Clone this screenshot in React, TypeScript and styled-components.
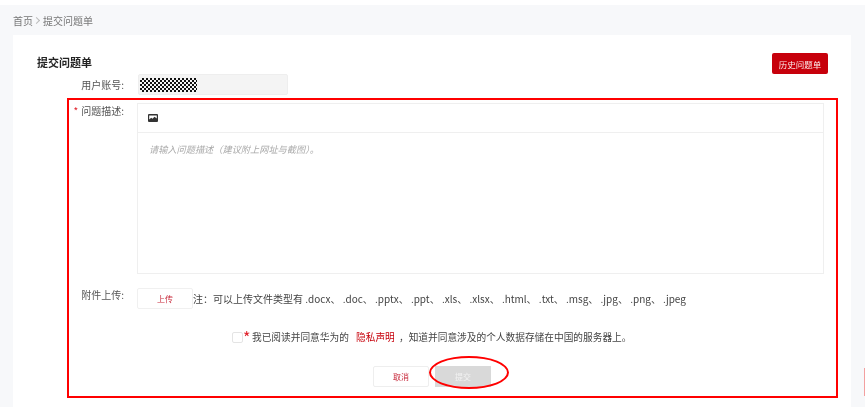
import styled, { createGlobalStyle } from 'styled-components';

const fileTypes = '.docx、 .doc、 .pptx、 .ppt、 .xls、 .xlsx、 .html、 .txt、 .msg、 .jpg、 .png、 .jpeg';

const GlobalStyle = createGlobalStyle`
  html, body {
    margin: 0;
    padding: 0;
    background: #fff;
  }
  * {
    box-sizing: border-box;
  }
`;

const App: React.FC = () => {
  return (
    <>
      <GlobalStyle />
      <Page>
        <Breadcrumb>
          <span>首页</span>
          <Crumbsep />
          <span>提交问题单</span>
        </Breadcrumb>
        <Card>
          <Header>
            <Title>提交问题单</Title>
            <HistoryButton>历史问题单</HistoryButton>
          </Header>
          <AccountRow>
            <Label>用户账号:</Label>
            <AccountInput>
              <Masked />
            </AccountInput>
          </AccountRow>
          <Highlight>
            <DescriptionRow>
              <Label>
                <Required>*</Required>问题描述:
              </Label>
              <Editor>
                <EditorToolbar>
                  <ImageIcon viewBox="0 0 10 8">
                    <path
                      fillRule="evenodd"
                      d="M1 0h8a1 1 0 0 1 1 1v6a1 1 0 0 1-1 1H1a1 1 0 0 1-1-1V1a1 1 0 0 1 1-1zm.2 1.4v4l2-1.7 1.3 1 2-1.9 2.3 1.7V1.4z"
                    />
                  </ImageIcon>
                </EditorToolbar>
                <Placeholder>请输入问题描述（建议附上网址与截图）。</Placeholder>
              </Editor>
            </DescriptionRow>
            <UploadRow>
              <Label>附件上传:</Label>
              <UploadButton>上传</UploadButton>
              <UploadNote>注：可以上传文件类型有 {fileTypes}</UploadNote>
            </UploadRow>
            <AgreementRow>
              <Checkbox />
              <BigStar>*</BigStar>
              <AgreementText>
                我已阅读并同意华为的 <PrivacyLink>隐私声明</PrivacyLink> ，知道并同意涉及的个人数据存储在中国的服务器上。
              </AgreementText>
            </AgreementRow>
            <Actions>
              <CancelButton>取消</CancelButton>
              <SubmitButton>
                提交
                <Ellipse />
              </SubmitButton>
            </Actions>
          </Highlight>
        </Card>
        <EdgeMark />
      </Page>
    </>
  );
};

const Page = styled.div`
  position: relative;
  height: 402px;
  margin-top: 5px;
  padding: 0 14px 0 13px;
  overflow: hidden;
  background: #f7f8fa;
  font-family: "Noto Sans CJK SC", "Open Sans", sans-serif;
  filter: blur(0.35px);
`;

const Breadcrumb = styled.div`
  display: flex;
  align-items: center;
  height: 30px;
  font-size: 10px;
  color: #777;
`;

const Crumbsep = styled.i`
  width: 5px;
  height: 5px;
  margin: 0 4px 0 1px;
  border-top: 1px solid #bbb;
  border-right: 1px solid #bbb;
  transform: rotate(45deg);
`;

const Card = styled.div`
  height: 372px;
  padding: 18px 23px 0 24px;
  background: #fff;
`;

const Header = styled.div`
  display: flex;
  justify-content: space-between;
  align-items: flex-start;
  height: 21px;
`;

const Title = styled.h2`
  margin: 0;
  font-size: 11px;
  font-weight: 700;
  line-height: 18px;
  color: #222;
`;

const HistoryButton = styled.button`
  width: 56px;
  height: 21px;
  padding: 0;
  border: 0;
  border-radius: 2px;
  background: #c7000b;
  color: #fbe8e8;
  font-family: inherit;
  font-size: 8.5px;
`;

const AccountRow = styled.div`
  display: flex;
  align-items: center;
  height: 21px;
  margin-bottom: 3px;
  gap: 14px;
`;

const Label = styled.label`
  flex: none;
  width: 87px;
  font-size: 10px;
  line-height: 20px;
  color: #555;
  text-align: right;
  white-space: nowrap;
`;

const AccountInput = styled.div`
  display: flex;
  align-items: center;
  width: 150px;
  height: 21px;
  padding-left: 1px;
  border: 1px solid #eee;
  border-radius: 2px;
  background: #f4f4f4;
`;

const Masked = styled.div`
  width: 57px;
  height: 14px;
  background: repeating-conic-gradient(#111 0 25%, #f4f4f4 0 50%) 0 0 / 4px 4px;
`;

const Highlight = styled.section`
  width: 771px;
  height: 300px;
  margin-left: 30px;
  padding-top: 3px;
  border: 2px solid #f00;
`;

const DescriptionRow = styled.div`
  display: flex;
  gap: 13px;

  ${Label} {
    width: 55px;
    margin-top: -2px;
  }
`;

const Required = styled.span`
  margin-right: 3px;
  color: #e0212b;
`;

const Editor = styled.div`
  width: 687px;
  height: 171px;
  border: 1px solid #efefef;
`;

const EditorToolbar = styled.div`
  display: flex;
  align-items: center;
  height: 29px;
  padding-left: 10px;
  border-bottom: 1px solid #efefef;
`;

const ImageIcon = styled.svg`
  width: 10px;
  height: 8px;
  fill: #333;
`;

const Placeholder = styled.div`
  padding: 9px 0 0 11px;
  font-size: 9.2px;
  font-style: italic;
  line-height: 14px;
  color: #aaa;
`;

const UploadRow = styled.div`
  display: flex;
  align-items: flex-start;
  height: 21px;
  margin-top: 14px;

  ${Label} {
    width: 55px;
    margin: -3px 13px 0 0;
  }
`;

const UploadButton = styled.button`
  flex: none;
  width: 56px;
  height: 21px;
  padding: 0;
  border: 1px solid #f0f0f0;
  border-radius: 2px;
  background: #fff;
  color: #c7283a;
  font-family: inherit;
  font-size: 8px;
`;

const UploadNote = styled.span`
  font-size: 10px;
  line-height: 21px;
  color: #444;
  white-space: pre;
`;

const AgreementRow = styled.div`
  display: flex;
  align-items: center;
  height: 16px;
  margin-top: 20px;
  padding-left: 163px;
`;

const Checkbox = styled.span`
  width: 11px;
  height: 11px;
  border: 1px solid #e4e4e4;
  border-radius: 2px;
`;

const BigStar = styled.span`
  align-self: flex-start;
  width: 8px;
  font-size: 16px;
  line-height: 16px;
  color: #e0212b;
`;

const AgreementText = styled.span`
  margin-left: 1px;
  font-size: 9.7px;
  color: #444;
  white-space: nowrap;
`;

const PrivacyLink = styled.a`
  margin: 0 2px 0 5px;
  color: #c7000b;
`;

const Actions = styled.div`
  display: flex;
  gap: 6px;
  margin-top: 21px;
  padding-left: 304px;
`;

const CancelButton = styled.button`
  width: 56px;
  height: 21px;
  padding: 0;
  border: 1px solid #eee;
  border-radius: 2px;
  background: #fff;
  color: #c7283a;
  font-family: inherit;
  font-size: 8px;
`;

const SubmitButton = styled.button`
  position: relative;
  width: 56px;
  height: 21px;
  padding: 0;
  border: 0;
  background: #d9d9d9;
  color: #f2f2f2;
  font-family: inherit;
  font-size: 8px;
`;

const Ellipse = styled.span`
  position: absolute;
  top: -10px;
  left: -6px;
  width: 80px;
  height: 33px;
  border: 2px solid #f00;
  border-radius: 50%;
`;

const EdgeMark = styled.span`
  position: absolute;
  top: 363px;
  right: 0;
  width: 1px;
  height: 28px;
  background: #f3a0a0;
`;

export default App;
